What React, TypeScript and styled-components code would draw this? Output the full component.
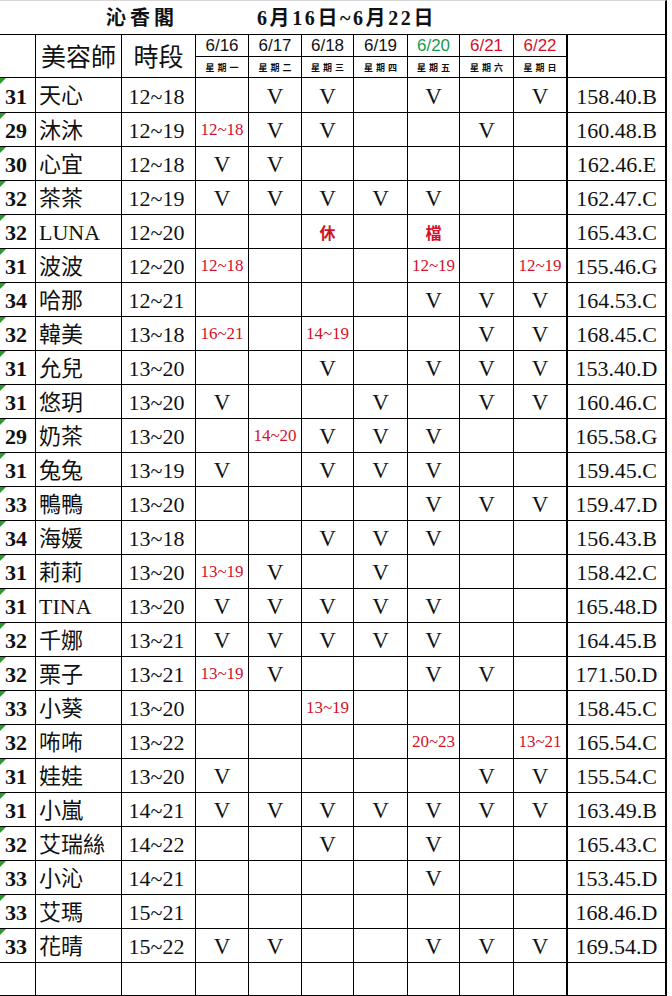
import React from 'react';
import styled, { createGlobalStyle, css } from 'styled-components';

const GlobalStyle = createGlobalStyle`
  html, body {
    margin: 0;
    padding: 0;
    background: #fff;
  }
  body {
    font-family: "Liberation Serif", "Noto Sans CJK TC", serif;
    color: #111;
  }
`;

const RED = '#d3122a';
const GREEN = '#179a4d';

type Line = { $thick?: boolean; $last?: boolean };

const cellLines = css<Line>`
  box-sizing: border-box;
  border-right: ${p => (p.$thick ? 2 : 1)}px solid #000;
  border-bottom: ${p => (p.$last ? 2 : 1)}px solid #000;
  display: flex;
  align-items: center;
  justify-content: center;
  white-space: nowrap;
  overflow: hidden;
`;

const Sheet = styled.div`
  display: grid;
  grid-template-columns: 36px 86px 74px 53px 53px 52px 54px 52px 54px 54px 99px;
  grid-template-rows: 35px 22px 21px 35px repeat(25, 34px) 34px;
  width: 667px;
`;

const TitleBar = styled.div`
  grid-column: 1 / -1;
  box-sizing: border-box;
  border-top: 1px solid #d6d6d6;
  border-bottom: 1px solid #000;
  border-right: 2px solid #000;
  display: flex;
  align-items: center;
  padding: 0 0 2px 106px;
  font-weight: 700;
  font-size: 20px;
`;

const ShopName = styled.span`
  font-family: "Noto Sans CJK TC", sans-serif;
  letter-spacing: 4px;
  width: 151px;
`;

const WeekRange = styled.span`
  letter-spacing: 2.6px;
`;

const HeadCell = styled.div<Line>`
  ${cellLines};
  grid-row: span 2;
  font-family: "Noto Sans CJK TC", sans-serif;
  font-size: 25px;
  padding-bottom: 2px;
`;

const DateCell = styled.div<Line & { $color: string }>`
  ${cellLines};
  font-family: "Liberation Sans", sans-serif;
  font-size: 17px;
  color: ${p => p.$color};
  padding-top: 1px;
`;

const DayCell = styled.div<Line>`
  ${cellLines};
  font-family: "Noto Sans CJK TC", sans-serif;
  font-weight: 700;
  font-size: 9px;
  letter-spacing: 3px;
  padding-left: 3px;
`;

const NumCell = styled.div<Line & { $flag?: boolean }>`
  ${cellLines};
  position: relative;
  justify-content: flex-start;
  padding: 3px 0 0 5px;
  font-size: 22px;
  font-weight: 700;
  &::before {
    content: '';
    display: ${p => (p.$flag ? 'block' : 'none')};
    position: absolute;
    top: 0;
    left: 0;
    border-top: 6px solid #2a9a2a;
    border-right: 6px solid transparent;
  }
`;

const NameCell = styled.div<Line>`
  ${cellLines};
  justify-content: flex-start;
  padding: 2px 0 0 3px;
  font-size: 22px;
  line-height: 1;
`;

const TimeCell = styled.div<Line>`
  ${cellLines};
  padding: 3px 4px 0 0;
  font-size: 22px;
`;

const MarkCell = styled.div<Line & { $note?: boolean; $strong?: boolean }>`
  ${cellLines};
  padding-top: ${p => (p.$note ? 1 : 3)}px;
  font-size: ${p => (p.$note ? (p.$strong ? 16 : 17) : 23)}px;
  font-weight: ${p => (p.$strong ? 700 : 400)};
  color: ${p => (p.$note ? RED : '#111')};
`;

const CodeCell = styled.div<Line>`
  ${cellLines};
  padding-top: 3px;
  font-size: 22px;
`;

const dates = [
  { d: '6/16', w: '星期一', c: '#111' },
  { d: '6/17', w: '星期二', c: '#111' },
  { d: '6/18', w: '星期三', c: '#111' },
  { d: '6/19', w: '星期四', c: '#111' },
  { d: '6/20', w: '星期五', c: GREEN },
  { d: '6/21', w: '星期六', c: RED },
  { d: '6/22', w: '星期日', c: RED },
];

type Row = [string, string, string, string[], string];

const rows: Row[] = [
  ['31', '天心', '12~18', ['', 'V', 'V', '', 'V', '', 'V'], '158.40.B'],
  ['29', '沐沐', '12~19', ['12~18', 'V', 'V', '', '', 'V', ''], '160.48.B'],
  ['30', '心宜', '12~18', ['V', 'V', '', '', '', '', ''], '162.46.E'],
  ['32', '茶茶', '12~19', ['V', 'V', 'V', 'V', 'V', '', ''], '162.47.C'],
  ['32', 'LUNA', '12~20', ['', '', '休', '', '檔', '', ''], '165.43.C'],
  ['31', '波波', '12~20', ['12~18', '', '', '', '12~19', '', '12~19'], '155.46.G'],
  ['34', '哈那', '12~21', ['', '', '', '', 'V', 'V', 'V'], '164.53.C'],
  ['32', '韓美', '13~18', ['16~21', '', '14~19', '', '', 'V', 'V'], '168.45.C'],
  ['31', '允兒', '13~20', ['', '', 'V', '', 'V', 'V', 'V'], '153.40.D'],
  ['31', '悠玥', '13~20', ['V', '', '', 'V', '', 'V', 'V'], '160.46.C'],
  ['29', '奶茶', '13~20', ['', '14~20', 'V', 'V', 'V', '', ''], '165.58.G'],
  ['31', '兔兔', '13~19', ['V', '', 'V', 'V', 'V', '', ''], '159.45.C'],
  ['33', '鴨鴨', '13~20', ['', '', '', '', 'V', 'V', 'V'], '159.47.D'],
  ['34', '海媛', '13~18', ['', '', 'V', 'V', 'V', '', ''], '156.43.B'],
  ['31', '莉莉', '13~20', ['13~19', 'V', '', 'V', '', '', ''], '158.42.C'],
  ['31', 'TINA', '13~20', ['V', 'V', 'V', 'V', 'V', '', ''], '165.48.D'],
  ['32', '千娜', '13~21', ['V', 'V', 'V', 'V', 'V', '', ''], '164.45.B'],
  ['32', '栗子', '13~21', ['13~19', 'V', '', '', 'V', 'V', ''], '171.50.D'],
  ['33', '小葵', '13~20', ['', '', '13~19', '', '', '', ''], '158.45.C'],
  ['32', '咘咘', '13~22', ['', '', '', '', '20~23', '', '13~21'], '165.54.C'],
  ['31', '娃娃', '13~20', ['V', '', '', '', '', 'V', 'V'], '155.54.C'],
  ['31', '小嵐', '14~21', ['V', 'V', 'V', 'V', 'V', 'V', 'V'], '163.49.B'],
  ['32', '艾瑞絲', '14~22', ['', '', 'V', '', 'V', '', ''], '165.43.C'],
  ['33', '小沁', '14~21', ['', '', '', '', 'V', '', ''], '153.45.D'],
  ['33', '艾瑪', '15~21', ['', '', '', '', '', '', ''], '168.46.D'],
  ['33', '花晴', '15~22', ['V', 'V', '', '', 'V', 'V', 'V'], '169.54.D'],
];

const emptyRow: Row = ['', '', '', ['', '', '', '', '', '', ''], ''];

export default function App() {
  const all = [...rows, emptyRow];
  return (
    <>
      <GlobalStyle />
      <Sheet>
        <TitleBar>
          <ShopName>沁香閣</ShopName>
          <WeekRange>6月16日~6月22日</WeekRange>
        </TitleBar>

        <HeadCell />
        <HeadCell>美容師</HeadCell>
        <HeadCell>時段</HeadCell>
        {dates.map((x, i) => (
          <DateCell key={x.d} $color={x.c} $thick={i === 6}>{x.d}</DateCell>
        ))}
        <HeadCell $thick />
        {dates.map((x, i) => (
          <DayCell key={x.w} $thick={i === 6}>{x.w}</DayCell>
        ))}

        {all.map(([num, name, time, marks, code], r) => {
          const last = r === all.length - 1;
          return (
            <React.Fragment key={r}>
              <NumCell $flag={!!num} $last={last}>{num}</NumCell>
              <NameCell $last={last}>{name}</NameCell>
              <TimeCell $last={last}>{time}</TimeCell>
              {marks.map((m, i) => {
                const note = m !== '' && m !== 'V';
                const strong = m === '休' || m === '檔';
                return (
                  <MarkCell key={i} $note={note} $strong={strong} $thick={i === 6} $last={last}>
                    {m}
                  </MarkCell>
                );
              })}
              <CodeCell $thick $last={last}>{code}</CodeCell>
            </React.Fragment>
          );
        })}
      </Sheet>
    </>
  );
}
